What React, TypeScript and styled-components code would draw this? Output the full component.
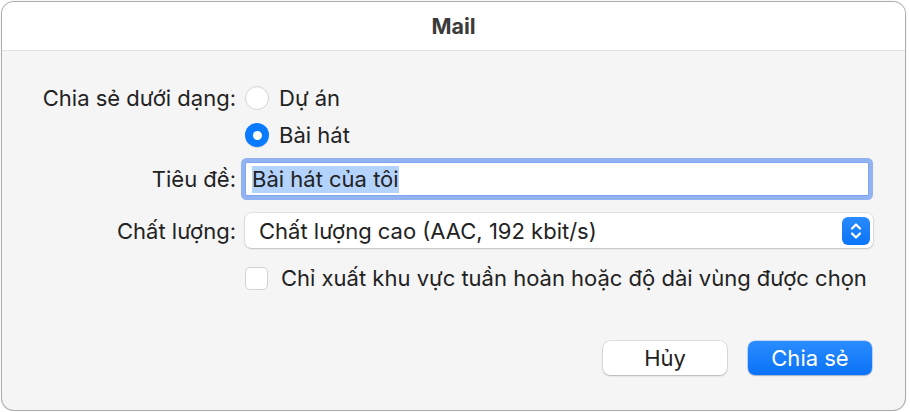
import React from 'react';
import styled, { createGlobalStyle } from 'styled-components';

const GlobalStyle = createGlobalStyle`
  html, body {
    margin: 0;
    padding: 0;
    background: #ffffff;
  }
  body {
    font-family: Inter, "Noto Sans", "Liberation Sans", sans-serif;
    color: #222222;
    -webkit-font-smoothing: antialiased;
  }
`;

const Page = styled.div`
  width: 910px;
  height: 412px;
  padding: 1px 4px 1px 1px;
  box-sizing: border-box;
`;

const Window = styled.div`
  width: 905px;
  height: 410px;
  box-sizing: border-box;
  border: 1px solid #acacac;
  border-radius: 13px;
  overflow: hidden;
  display: flex;
  flex-direction: column;
  background: #f5f5f5;
  box-shadow: 0 0 1px rgba(0, 0, 0, 0.25);
`;

const TitleBar = styled.div`
  height: 48px;
  flex: none;
  background: #ffffff;
  border-bottom: 1px solid #e2e2e2;
  display: flex;
  align-items: center;
  justify-content: center;
  font-size: 21.5px;
  font-weight: 700;
  color: #3a3a3a;
`;

const Body = styled.div`
  flex: 1;
  display: flex;
  flex-direction: column;
  padding: 33px 32px 0 0;
`;

const Row = styled.div<{ $height: number; $gap: number }>`
  display: grid;
  grid-template-columns: 234px 1fr;
  column-gap: 8px;
  align-items: center;
  height: ${p => p.$height}px;
  margin-top: ${p => p.$gap}px;
`;

const Label = styled.div`
  text-align: right;
  font-size: 22px;
  white-space: nowrap;
`;

const Option = styled.label`
  display: flex;
  align-items: center;
  font-size: 22px;
  white-space: nowrap;
  padding-left: 1px;
`;

const Radio = styled.span<{ $checked?: boolean }>`
  width: 24px;
  height: 24px;
  box-sizing: border-box;
  border-radius: 50%;
  flex: none;
  margin-right: 10px;
  background: ${p => (p.$checked ? '#0a7aff' : '#ffffff')};
  border: ${p => (p.$checked ? 'none' : '1px solid #d4d4d4')};
  box-shadow: ${p => (p.$checked ? '0 1px 1px rgba(0,0,0,0.1)' : 'inset 0 1px 1px rgba(0,0,0,0.04)')};
  display: flex;
  align-items: center;
  justify-content: center;
  &::after {
    content: '';
    display: ${p => (p.$checked ? 'block' : 'none')};
    width: 9px;
    height: 9px;
    border-radius: 50%;
    background: #ffffff;
  }
`;

const Checkbox = styled.span`
  width: 23px;
  height: 23px;
  box-sizing: border-box;
  border-radius: 5px;
  flex: none;
  margin-right: 13px;
  background: #ffffff;
  border: 1px solid #d2d2d2;
`;

const TextField = styled.div`
  height: 34px;
  margin: 0 4px 0 1px;
  box-sizing: border-box;
  background: #ffffff;
  border: 1px solid #7ea6f0;
  box-shadow: 0 0 0 4px rgba(108, 152, 240, 0.72);
  border-radius: 2px;
  display: flex;
  align-items: center;
  padding-left: 6px;
  font-size: 22px;
`;

const Selected = styled.span`
  background: #b3d3fc;
  line-height: 27px;
`;

const Popup = styled.div`
  height: 35px;
  margin-left: 1px;
  box-sizing: border-box;
  background: #ffffff;
  border-radius: 6px;
  box-shadow: 0 0 0 0.5px rgba(0, 0, 0, 0.14), 0 1px 2px rgba(0, 0, 0, 0.16);
  display: flex;
  align-items: center;
  justify-content: space-between;
  padding: 0 3px 0 14px;
  font-size: 22px;
`;

const Stepper = styled.span`
  width: 28px;
  height: 28px;
  border-radius: 6px;
  background: linear-gradient(#2b8bff, #0a74f8);
  display: flex;
  align-items: center;
  justify-content: center;
`;

const Footer = styled.div`
  display: flex;
  justify-content: flex-end;
  gap: 21px;
  margin-top: 53px;
  padding-right: 1px;
`;

const Button = styled.button<{ $primary?: boolean }>`
  width: 124px;
  height: 34px;
  border: none;
  border-radius: 7px;
  font-family: inherit;
  font-size: 22px;
  padding: 0;
  color: ${p => (p.$primary ? '#ffffff' : '#222222')};
  background: ${p => (p.$primary ? 'linear-gradient(#2a8cff, #0a72f7)' : '#ffffff')};
  box-shadow: ${p =>
    p.$primary
      ? '0 0 0 0.5px rgba(0,90,220,0.4), 0 1px 1.5px rgba(0,0,0,0.18)'
      : '0 0 0 0.5px rgba(0,0,0,0.15), 0 1px 2px rgba(0,0,0,0.2)'};
`;

const StepperIcon = () => (
  <svg width="14" height="20" viewBox="0 0 14 20" fill="none">
    <path d="M3 7.5 L7 3.5 L11 7.5" stroke="#ffffff" strokeWidth="2.2" strokeLinecap="round" strokeLinejoin="round" />
    <path d="M3 12.5 L7 16.5 L11 12.5" stroke="#ffffff" strokeWidth="2.2" strokeLinecap="round" strokeLinejoin="round" />
  </svg>
);

const App: React.FC = () => {
  return (
    <Page>
      <GlobalStyle />
      <Window>
        <TitleBar>Mail</TitleBar>
        <Body>
          <Row $height={28} $gap={0}>
            <Label>Chia sẻ dưới dạng:</Label>
            <Option><Radio />Dự án</Option>
          </Row>
          <Row $height={28} $gap={9}>
            <span />
            <Option><Radio $checked />Bài hát</Option>
          </Row>
          <Row $height={34} $gap={13}>
            <Label>Tiêu đề:</Label>
            <TextField><Selected>Bài hát của tôi</Selected></TextField>
          </Row>
          <Row $height={35} $gap={17}>
            <Label>Chất lượng:</Label>
            <Popup>
              <span>Chất lượng cao (AAC, 192 kbit/s)</span>
              <Stepper><StepperIcon /></Stepper>
            </Popup>
          </Row>
          <Row $height={23} $gap={17}>
            <span />
            <Option><Checkbox />Chỉ xuất khu vực tuần hoàn hoặc độ dài vùng được chọn</Option>
          </Row>
          <Footer>
            <Button>Hủy</Button>
            <Button $primary>Chia sẻ</Button>
          </Footer>
        </Body>
      </Window>
    </Page>
  );
};

export default App;
